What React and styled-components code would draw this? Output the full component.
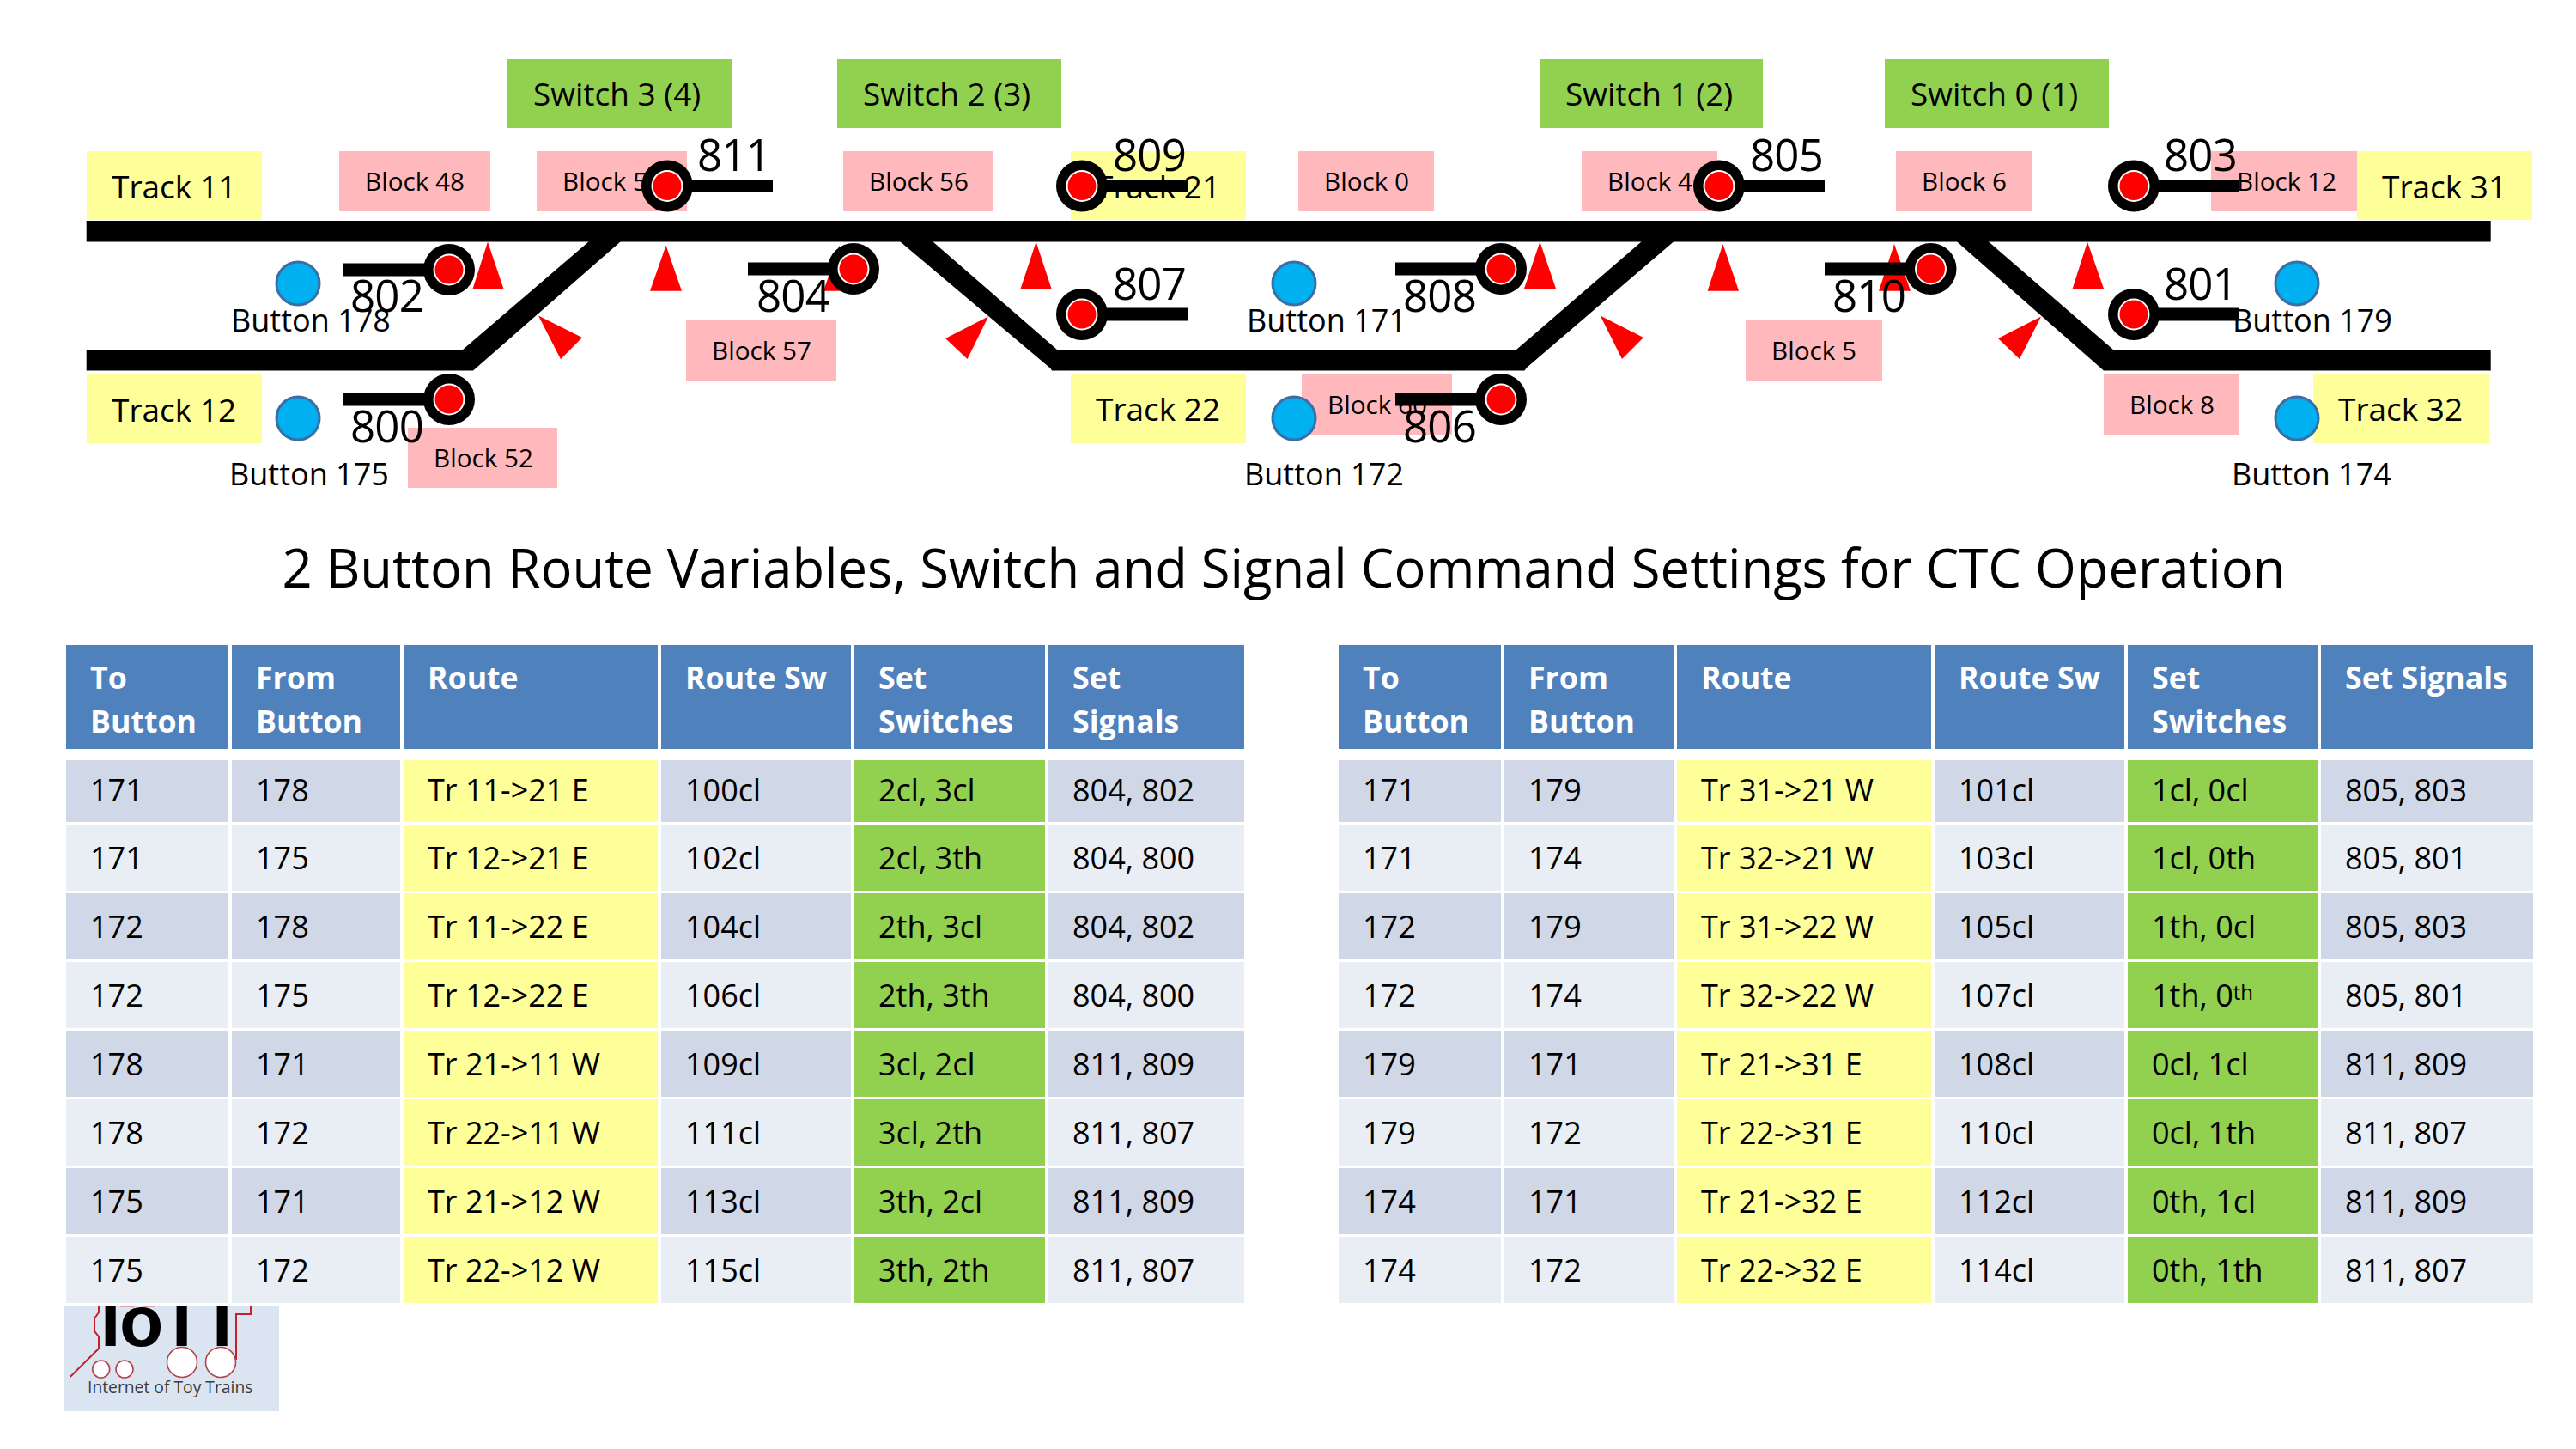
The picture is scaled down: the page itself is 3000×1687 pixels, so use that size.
import React from "react";
import styled, { createGlobalStyle } from "styled-components";

const Global = createGlobalStyle`
  html, body { margin: 0; padding: 0; background: #fff; }
`;

const Page = styled.div`
  width: 3000px;
  height: 1687px;
  overflow: hidden;
  background: #fff;
  color: #000;
  font-family: "Open Sans", Lato, sans-serif;
`;

const Diagram = styled.div`
  position: relative;
  width: 3000px;
  height: 600px;
`;

const Box = styled.div`
  position: absolute;
  left: ${(p) => p.$x}px;
  top: ${(p) => p.$y}px;
  width: ${(p) => p.$w}px;
  height: ${(p) => p.$h}px;
  box-sizing: border-box;
  display: flex;
  align-items: center;
  padding-left: 30px;
  white-space: nowrap;
  line-height: 1;
`;

const SwitchBox = styled(Box)`
  background: #92d050;
  font-size: 37px;
`;

const TrackBox = styled(Box)`
  background: #ffff99;
  font-size: 37px;
  padding-left: 29px;
`;

const BlockBox = styled(Box)`
  background: #ffb9bd;
  font-size: 29.7px;
`;

const Drawing = styled.svg`
  position: absolute;
  left: 0;
  top: 0;
`;

const Caption = styled.div`
  position: absolute;
  left: ${(p) => p.$x}px;
  top: ${(p) => p.$y}px;
  white-space: nowrap;
  line-height: 1;
`;

const SignalNumber = styled(Caption)`
  font-size: 51px;
  letter-spacing: -0.8px;
`;

const ButtonName = styled(Caption)`
  font-size: 36px;
`;

const Title = styled.h1`
  margin: 0;
  height: 151px;
  padding: 20px 0 0 0;
  box-sizing: border-box;
  text-align: center;
  font-size: 61.5px;
  font-weight: 400;
  line-height: 80px;
  width: 2990px;
`;

const TablesRow = styled.div`
  display: flex;
  padding-left: 77px;
  gap: 110px;
`;

const Table = styled.div`
  display: grid;
  grid-template-columns: ${(p) => p.$cols};
  grid-template-rows: 131px 72px repeat(7, 77px);
  column-gap: 4px;
  row-gap: 3px;
`;

const HeadCell = styled.div`
  margin-bottom: 10px;
  padding: 12px 0 0 28px;
  background: #4f81bd;
  color: #fff;
  font-size: 35.7px;
  font-weight: 700;
  line-height: 51px;
  white-space: pre-line;
`;

const tones = {
  dark: "#d0d8e8",
  light: "#e9edf4",
  route: "#ffff99",
  set: "#92d050",
};

const Cell = styled.div`
  display: flex;
  align-items: center;
  padding: 0 0 ${(p) => (p.$first ? 3 : 0)}px 28px;
  background: ${(p) => tones[p.$tone]};
  font-size: 36px;
  white-space: nowrap;
`;

const Sup = styled.sup`
  font-size: 24px;
  line-height: 0;
  position: relative;
  top: -4px;
  vertical-align: super;
`;

const Logo = styled.div`
  position: relative;
  width: 250px;
  height: 123px;
  margin: 3px 0 0 75px;
  background: #dbe4f1;
  overflow: hidden;
`;

const LogoArt = styled.svg`
  display: block;
`;

const LogoText = styled.div`
  position: absolute;
  left: 27px;
  top: 82px;
  font-size: 19.3px;
  line-height: 26px;
  color: #3c3c3c;
  white-space: nowrap;
`;

const switches = [
  ["Switch 3 (4)", 591, 261],
  ["Switch 2 (3)", 975, 261],
  ["Switch 1 (2)", 1793, 260],
  ["Switch 0 (1)", 2195, 261],
];

const tracks = [
  ["Track 11", 101, 176, 204, 80],
  ["Track 12", 101, 436, 204, 80],
  ["Track 21", 1247, 176, 204, 80],
  ["Track 22", 1247, 435, 204, 81],
  ["Track 31", 2745, 176, 204, 80],
  ["Track 32", 2694, 435, 205, 81],
];

const blocks = [
  ["Block 48", 395, 176, 176],
  ["Block 53", 625, 176, 175],
  ["Block 56", 982, 176, 175],
  ["Block 0", 1512, 176, 158],
  ["Block 4", 1842, 176, 158],
  ["Block 6", 2208, 176, 159],
  ["Block 12", 2575, 176, 170],
  ["Block 52", 475, 498, 174],
  ["Block 57", 799, 373, 175],
  ["Block 5", 2033, 373, 159],
  ["Block 8", 2450, 436, 158],
  ["Block 60", 1516, 436, 175],
];

const rails = [
  "100.7,257 2900.7,257 2900.7,281.5 100.7,281.5",
  "100.7,407 539,407 686,281 723,281 551,431.6 100.7,431.6",
  "1048,281 1086,281 1231,407 1766,407 1912,281 1949.5,281 1778,428 1775.5,431.6 1225,431.6 1223.5,429",
  "2278.7,281 2315.5,281 2461,407 2900.7,407 2900.7,431.6 2450,431.6",
];

const arrows = [
  "568,281.5 550.6,336 586.4,336",
  "775.6,285.7 757,338.7 794,338.7",
  "627,367.4 678,393 653,418.3",
  "977.5,285.7 959,338.7 996,338.7",
  "1206.6,281.5 1188.6,336 1224.5,336",
  "1151,368.5 1101,394 1126.6,418",
  "1793.4,281.5 1775,336 1812,336",
  "2006.5,284 1988.6,338.7 2025,338.7",
  "1863.7,367.4 1914,393 1889,418",
  "2206,284 2188,338.7 2225,338.7",
  "2431,281.5 2413.7,336 2450,336",
  "2377,368.5 2327,394 2352,418",
];

// head x, head y, far end of the arm, number left, number top
const signals = [
  [523, 314, 400, "802", 408, 318],
  [523, 465, 400, "800", 408, 470],
  [777, 216.5, 900, "811", 812, 154],
  [1260, 216.5, 1383, "809", 1296, 154],
  [994, 313, 871, "804", 881, 318],
  [1260, 366, 1383, "807", 1296, 304],
  [2002, 216.5, 2125, "805", 2038, 154],
  [1748, 313, 1625, "808", 1634, 318],
  [1748, 465, 1625, "806", 1634, 470],
  [2248.5, 313, 2125, "810", 2134, 318],
  [2485, 216.5, 2608, "803", 2520, 154],
  [2485, 366, 2608, "801", 2520, 304],
];

const dots = [
  [347, 330],
  [347, 487],
  [1507, 330],
  [1507, 487],
  [2675, 330],
  [2675, 487],
];

const buttonNames = [
  ["Button 178", 269, 355],
  ["Button 175", 267, 534],
  ["Button 171", 1452, 355],
  ["Button 172", 1449, 534],
  ["Button 179", 2600, 355],
  ["Button 174", 2599, 534],
];

const heads = ["To\nButton", "From\nButton", "Route", "Route Sw", "Set\nSwitches"];

const leftRows = [
  ["171", "178", "Tr 11->21 E", "100cl", "2cl, 3cl", "804, 802"],
  ["171", "175", "Tr 12->21 E", "102cl", "2cl, 3th", "804, 800"],
  ["172", "178", "Tr 11->22 E", "104cl", "2th, 3cl", "804, 802"],
  ["172", "175", "Tr 12->22 E", "106cl", "2th, 3th", "804, 800"],
  ["178", "171", "Tr 21->11 W", "109cl", "3cl, 2cl", "811, 809"],
  ["178", "172", "Tr 22->11 W", "111cl", "3cl, 2th", "811, 807"],
  ["175", "171", "Tr 21->12 W", "113cl", "3th, 2cl", "811, 809"],
  ["175", "172", "Tr 22->12 W", "115cl", "3th, 2th", "811, 807"],
];

const rightRows = [
  ["171", "179", "Tr 31->21 W", "101cl", "1cl, 0cl", "805, 803"],
  ["171", "174", "Tr 32->21 W", "103cl", "1cl, 0th", "805, 801"],
  ["172", "179", "Tr 31->22 W", "105cl", "1th, 0cl", "805, 803"],
  ["172", "174", "Tr 32->22 W", "107cl", <>1th, 0<Sup>th</Sup></>, "805, 801"],
  ["179", "171", "Tr 21->31 E", "108cl", "0cl, 1cl", "811, 809"],
  ["179", "172", "Tr 22->31 E", "110cl", "0cl, 1th", "811, 807"],
  ["174", "171", "Tr 21->32 E", "112cl", "0th, 1cl", "811, 809"],
  ["174", "172", "Tr 22->32 E", "114cl", "0th, 1th", "811, 807"],
];

const RouteTable = ({ cols, lastHead, rows }) => (
  <Table $cols={cols}>
    {[...heads, lastHead].map((h) => (
      <HeadCell key={h}>{h}</HeadCell>
    ))}
    {rows.map((row, r) =>
      row.map((value, c) => {
        const band = r % 2 === 0 ? "dark" : "light";
        const tone = c === 2 ? "route" : c === 4 ? "set" : band;
        return (
          <Cell key={c} $tone={tone} $first={r === 0}>
            {value}
          </Cell>
        );
      })
    )}
  </Table>
);

const App = () => (
  <Page>
    <Global />
    <Diagram>
      {switches.map(([name, x, w]) => (
        <SwitchBox key={name} $x={x} $y={69} $w={w} $h={79.5}>
          {name}
        </SwitchBox>
      ))}
      {tracks.map(([name, x, y, w, h]) => (
        <TrackBox key={name} $x={x} $y={y} $w={w} $h={h}>
          {name}
        </TrackBox>
      ))}
      {blocks.map(([name, x, y, w]) => (
        <BlockBox key={name} $x={x} $y={y} $w={w} $h={70}>
          {name}
        </BlockBox>
      ))}
      <Drawing width="3000" height="600" viewBox="0 0 3000 600">
        {rails.map((points) => (
          <polygon key={points} points={points} fill="#000" />
        ))}
        {arrows.map((points) => (
          <polygon key={points} points={points} fill="#f00" />
        ))}
        {dots.map(([cx, cy]) => (
          <circle key={cx + "-" + cy} cx={cx} cy={cy} r="25" fill="#00b0f0" stroke="#3a6ea5" strokeWidth="3" />
        ))}
        {signals.map(([cx, cy, end]) => (
          <g key={cx + "-" + cy}>
            <rect x={Math.min(cx, end)} y={cy - 7.5} width={Math.abs(end - cx)} height="15" fill="#000" />
            <circle cx={cx} cy={cy} r="30" fill="#000" />
            <circle cx={cx} cy={cy} r="18.5" fill="#fff" />
            <circle cx={cx} cy={cy} r="16.5" fill="#f00" />
          </g>
        ))}
      </Drawing>
      {signals.map(([, , , number, x, y]) => (
        <SignalNumber key={number} $x={x} $y={y}>
          {number}
        </SignalNumber>
      ))}
      {buttonNames.map(([name, x, y]) => (
        <ButtonName key={name} $x={x} $y={y}>
          {name}
        </ButtonName>
      ))}
    </Diagram>
    <Title>2 Button Route Variables, Switch and Signal Command Settings for CTC Operation</Title>
    <TablesRow>
      <RouteTable cols="189px 196px 296px 221px 222px 228px" lastHead={"Set\nSignals"} rows={leftRows} />
      <RouteTable cols="189px 197px 296px 221px 221px 247px" lastHead="Set Signals" rows={rightRows} />
    </TablesRow>
    <Logo>
      <LogoArt width="250" height="123" viewBox="0 0 250 123">
        <text x="42 64 111 158" y="47" fontFamily="'Liberation Sans', sans-serif" fontWeight="700" fontSize="84" fill="#000">
          IoTT
        </text>
        <g fill="none" stroke="#c8202a" strokeWidth="2">
          <polyline points="6.7,83 40,50 40,36 35,30 35,15 40,8 40,0" />
          <polyline points="200,63 200,10 217,10 217,0" />
          <path d="M65 1h17M92 1h13" stroke="#e0a0a8" />
        </g>
        <g fill="#fff" stroke="#b5434a" strokeWidth="1.6">
          <circle cx="42.7" cy="74" r="10" />
          <circle cx="70" cy="74" r="10" />
          <circle cx="137" cy="66" r="17.5" />
          <circle cx="182" cy="66" r="17.5" />
        </g>
      </LogoArt>
      <LogoText>Internet of Toy Trains</LogoText>
    </Logo>
  </Page>
);

export default App;
